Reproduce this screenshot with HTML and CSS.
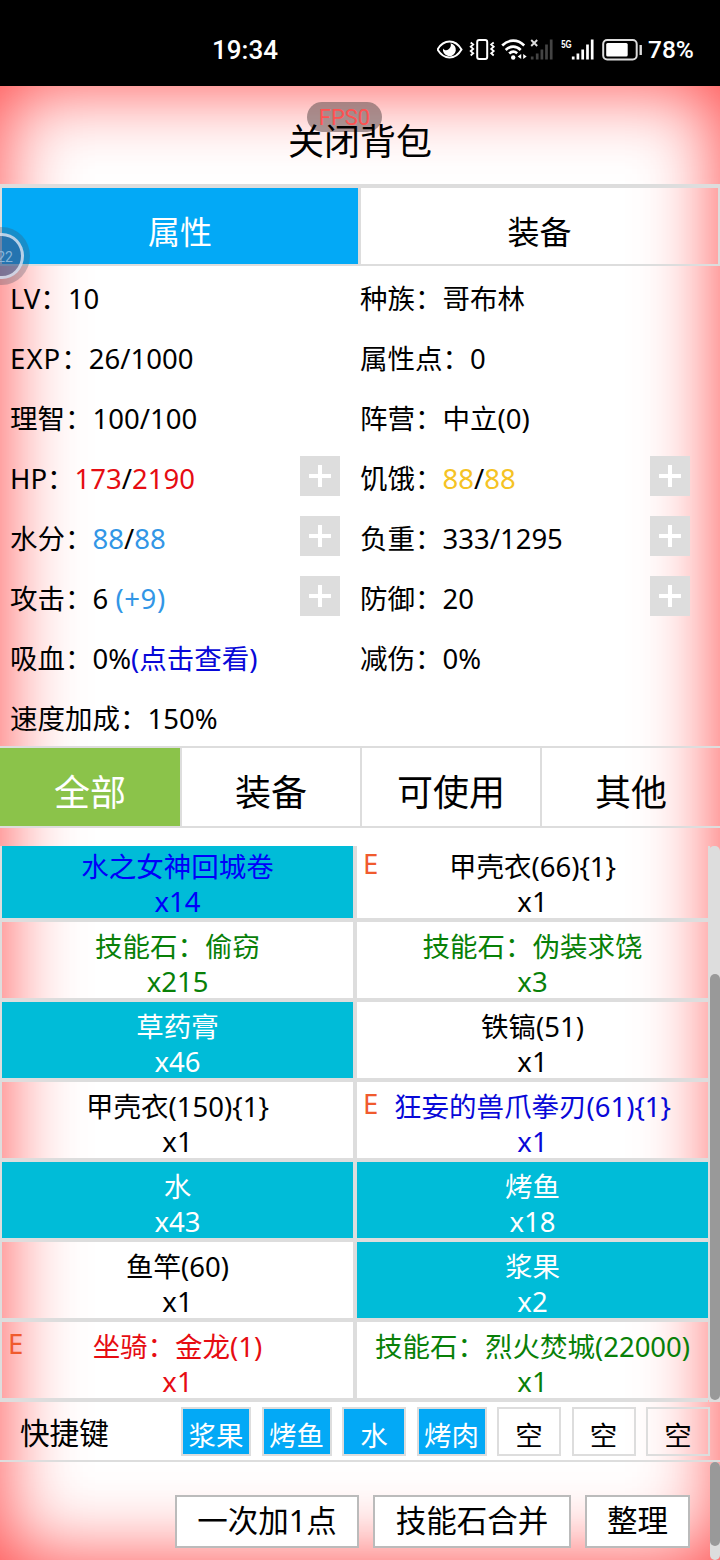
FILE: index.html
```
<!DOCTYPE html>
<html lang="zh-CN">
<head>
<meta charset="utf-8">
<title>背包</title>
<link rel="stylesheet" href="styles.css">
</head>
<body>
<header class="status">
  <span class="clock">19:34</span>
  <svg class="status-icons" width="206" height="30" viewBox="0 0 206 30" fill="none">
    <path d="M.5 14.500C4 8.500 8 6.500 12.500 6.500S21 8.500 24.500 14.500C21 20.500 17 22.500 12.500 22.500S4 20.500 .5 14.500Z" stroke="#fff" stroke-width="2"/>
    <path d="M13.500 8.200a6.500 6.500 0 1 1-7.500 5.200c1.200 2 3.800 2.400 5.600.8 1.900-1.600 2.900-4 1.900-6z" fill="#fff"/>
    <g transform="translate(2.700 0)">
    <rect x="37.500" y="5" width="10" height="19" rx="2" stroke="#fff" stroke-width="2"/>
    <path d="M31 7.500l2.500 2-2.500 2.200 2.500 2.200-2.500 2.200 2.500 2.200-2.500 2.200M54 7.500l-2.500 2 2.500 2.200-2.500 2.200 2.500 2.200-2.500 2.200 2.500 2.200" stroke="#fff" stroke-width="1.800"/>
    <path d="M62.500 10.500c6.500-6.500 15.500-6.500 22 0M66 15c4.500-4.500 10.500-4.500 15 0M69.500 18.500c2.500-2.400 5.500-2.400 8-.2" stroke="#fff" stroke-width="2.600"/>
    <circle cx="73.500" cy="22.500" r="2.200" fill="#fff"/>
    <path d="M81.500 19v5l-3.500-2.500zM83.500 19v5l3.500-2.500z" fill="#fff"/>
    <path d="M91.500 5l6 6M97.500 5l-6 6" stroke="#ddd" stroke-width="1.900"/>
    <path d="M92.500 24.500v-3M97.500 24.500v-6M102.200 24.500v-10M106.800 24.500v-15M111.500 24.500V4.500" stroke="#444" stroke-width="2.700"/>
    <path d="M133.500 24.500v-3M138.200 24.500v-6M143 24.500v-10M147.800 24.500v-15M152.500 24.500V4.500" stroke="#fff" stroke-width="2.700"/>
    <rect x="163.500" y="5" width="33.500" height="19.500" rx="4" stroke="#ddd" stroke-width="2"/>
    <rect x="166.500" y="8" width="21.500" height="13.500" rx="1.500" fill="#fff"/>
    <path d="M201 10v10" stroke="#ddd" stroke-width="2.400"/>
    <text x="121.500" y="13" class="net" fill="#fff" textLength="10.500" lengthAdjust="spacingAndGlyphs">5G</text>
    </g>
  </svg>
  <span class="charge">78%</span>
</header>

<main class="app">
  <div class="title"><span class="fps">FPS0</span><span class="title-text">关闭背包</span></div>

  <nav class="tabs">
    <div class="tab tab-on">属性</div>
    <div class="tab tab-end">装备</div>
  </nav>

  <section class="stats">
    <div class="stat">LV：<span>10</span></div>
    <div class="stat">种族：<span>哥布林</span></div>
    <div class="stat"><span class="wide">EXP</span>：<span>26/1000</span></div>
    <div class="stat">属性点：<span>0</span></div>
    <div class="stat">理智：<span>100/100</span></div>
    <div class="stat">阵营：<span>中立(0)</span></div>
    <div class="stat">HP：<span class="red">173</span>/<span class="red">2190</span><i class="plus"></i></div>
    <div class="stat">饥饿：<span class="gold">88</span>/<span class="gold">88</span><i class="plus"></i></div>
    <div class="stat">水分：<span class="sky">88</span>/<span class="sky">88</span><i class="plus"></i></div>
    <div class="stat">负重：<span>333/1295</span><i class="plus"></i></div>
    <div class="stat">攻击：<span>6&nbsp;</span><span class="sky bonus">(+9)</span><i class="plus"></i></div>
    <div class="stat">防御：<span>20</span><i class="plus"></i></div>
    <div class="stat">吸血：<span>0%</span><span class="blue">(点击查看)</span></div>
    <div class="stat">减伤：<span>0%</span></div>
    <div class="stat">速度加成：<span>150%</span></div>
  </section>

  <nav class="filters">
    <div class="filter filter-on">全部</div>
    <div class="filter">装备</div>
    <div class="filter">可使用</div>
    <div class="filter">其他</div>
  </nav>

  <section class="bag">
    <div class="items">
      <div class="item use bright"><p>水之女神回城卷</p><p>x14</p></div>
      <div class="item"><b class="worn">E</b><p>甲壳衣(66){1}</p><p>x1</p></div>
      <div class="item green"><p>技能石：偷窃</p><p>x215</p></div>
      <div class="item green"><p>技能石：伪装求饶</p><p>x3</p></div>
      <div class="item use"><p>草药膏</p><p>x46</p></div>
      <div class="item"><p>铁镐(51)</p><p>x1</p></div>
      <div class="item"><p>甲壳衣(150){1}</p><p>x1</p></div>
      <div class="item blue"><b class="worn">E</b><p>狂妄的兽爪拳刃(61){1}</p><p>x1</p></div>
      <div class="item use"><p>水</p><p>x43</p></div>
      <div class="item use"><p>烤鱼</p><p>x18</p></div>
      <div class="item"><p>鱼竿(60)</p><p>x1</p></div>
      <div class="item use"><p>浆果</p><p>x2</p></div>
      <div class="item red"><b class="worn">E</b><p>坐骑：金龙(1)</p><p>x1</p></div>
      <div class="item green"><p>技能石：烈火焚城(22000)</p><p>x1</p></div>
    </div>
    <div class="track"><div class="thumb"></div></div>
  </section>

  <section class="quick">
    <span class="quick-label">快捷键</span>
    <div class="slots">
      <div class="slot slot-on">浆果</div>
      <div class="slot slot-on">烤鱼</div>
      <div class="slot slot-on single">水</div>
      <div class="slot slot-on">烤肉</div>
      <div class="slot single">空</div>
      <div class="slot single">空</div>
      <div class="slot single">空</div>
    </div>
  </section>

  <footer class="foot">
    <div class="actions">
      <button class="action add">一次加1点</button>
      <button class="action merge">技能石合并</button>
      <button class="action sort">整理</button>
    </div>
    <div class="track foot-track"><div class="thumb"></div></div>
  </footer>
</main>
<div class="bubble"><span>22</span></div>
</body>
</html>
```
FILE: styles.css
```
* { box-sizing: border-box; }
body {
  margin: 0;
  width: 720px;
  height: 1560px;
  overflow: hidden;
  position: relative;
  background: #fff;
  color: #000;
  font: 27.5px/36px "Noto Sans", "Noto Sans CJK SC", sans-serif;
}
p { margin: 0; }

.status {
  height: 86px;
  padding: 14px 26px 0 212px;
  background: #000;
  color: #fff;
  display: flex;
  align-items: center;
  font: 500 26px/30px Roboto, sans-serif;
}
.clock { width: 225px; flex: none; }
.status-icons { flex: none; margin-top: -1px; }
.charge { margin-left: 5px; font-size: 24.5px; }
.net { font: 700 11px "Liberation Sans", sans-serif; }

.app {
  height: 1474px;
  box-shadow: inset 0 0 80px rgba(255, 0, 0, .75);
  display: flex;
  flex-direction: column;
}
.title {
  height: 98px;
  flex: none;
  position: relative;
  display: flex;
  justify-content: center;
  padding-top: 36px;
  font-size: 36px;
  line-height: 40px;
}
.title-text { position: relative; }
.fps {
  position: absolute;
  left: 307px;
  top: 16px;
  width: 75px;
  height: 30px;
  border-radius: 15px;
  background: rgba(110, 90, 90, .6);
  color: #ff5151;
  font: 22px/32px Roboto, sans-serif;
  text-align: center;
}

.tabs {
  height: 82px;
  flex: none;
  border: 2px solid #ddd;
  border-top-width: 4px;
  display: grid;
  grid-template-columns: 356px 1fr;
}
.tab {
  height: 76px;
  font-size: 32px;
  line-height: 88px;
  text-align: center;
}
.tab-end { border-left: 3px solid #ddd; }
.tab-on { background: #03a9f6; color: #fff; }

.stats {
  height: 480px;
  flex: none;
  display: grid;
  grid-template-columns: 350px 350px;
  grid-auto-rows: 60px;
  padding-left: 10px;
}
.stat { display: flex; align-items: center; padding: 5px 10px 0 0; white-space: pre; }
.wide { letter-spacing: 1.1px; }
.bonus { letter-spacing: .6px; }
.plus {
  width: 40px;
  height: 40px;
  margin: -5px 10px 0 auto;
  background:
    linear-gradient(#fff, #fff) 9px 18px / 22px 4px no-repeat,
    linear-gradient(#fff, #fff) 18px 9px / 4px 22px no-repeat,
    #ddd;
}
.red { color: #e60c12; }
.gold { color: #f5c324; }
.sky { color: #3296e6; }
.blue { color: #0808d8; }
.green { color: #088008; }

.filters {
  height: 82px;
  flex: none;
  border: 2px solid #ddd;
  border-width: 2px 0;
  display: grid;
  grid-template-columns: 182px 180px 180px 178px;
  grid-template-rows: 78px;
}
.filter {
  border-right: 2px solid #ddd;
  font-size: 36px;
  line-height: 90px;
  text-align: center;
}
.filter:last-child { border-right: 0; }
.filter-on { background: #8bc34a; color: #fff; }

.bag { height: 556px; flex: none; margin-top: 18px; overflow: hidden; display: flex; }
.items {
  width: 708px;
  height: 562px;
  flex: none;
  margin-top: -6px;
  border-bottom: 2px solid #ddd;
  display: grid;
  grid-template-columns: 355px 355px;
  grid-auto-rows: 80px;
}
.item {
  position: relative;
  border: 2px solid #ddd;
  padding-top: 7px;
  line-height: 35px;
  text-align: center;
}
.use { background: #00bcd8; color: #fff; }
.bright { color: #0000fa; }
.worn {
  position: absolute;
  left: 6px;
  top: 4px;
  color: #f05a2d;
  font-weight: 400;
}
.track {
  position: relative;
  width: 11px;
  margin-left: 1px;
  border-radius: 5px 5px 0 0;
  background: #ddd;
}
.bag .thumb { margin-top: 128px; height: 426px; }
.thumb { width: 10px; margin-left: 1px; border-radius: 5px; background: #999; }

.quick {
  height: 60px;
  flex: none;
  border-bottom: 2px solid #ddd;
  display: flex;
  align-items: center;
}
.quick-label { width: 181px; padding: 4px 0 0 20px; font-size: 29.6px; }
.slots { width: 529px; display: flex; justify-content: space-between; }
.slot {
  width: 70px;
  height: 49px;
  border: 2px solid #ddd;
  line-height: 54px;
  text-align: center;
}
.single { width: 64px; }
.slot-on { background: #03a9f6; color: #fff; }

.foot { height: 98px; display: flex; justify-content: space-between; }
.actions { display: flex; gap: 14px; padding: 33px 0 0 175px; }
.action {
  height: 53px;
  padding: 0 0 4px;
  border: 2px solid #bbb;
  background: #fff;
  color: #000;
  font: inherit;
  font-size: 30.5px;
}
.add { width: 184px; }
.merge { width: 198px; }
.sort { width: 105px; }
.foot-track { width: 10px; border-radius: 5px; }
.foot .thumb { margin-left: 0; height: 84px; }

.bubble {
  position: absolute;
  left: -26px;
  top: 227px;
  width: 56px;
  height: 58px;
  border-radius: 50%;
  background: rgba(70, 80, 100, .3);
}
.bubble span {
  position: absolute;
  left: 6px;
  top: 6px;
  width: 44px;
  height: 46px;
  border: 3px solid rgba(235, 240, 250, .75);
  border-radius: 50%;
  background: rgba(50, 90, 150, .5);
  color: #87b4d8;
  font: 14px/42px Roboto, sans-serif;
  text-align: right;
  padding-right: 8px;
}
```
